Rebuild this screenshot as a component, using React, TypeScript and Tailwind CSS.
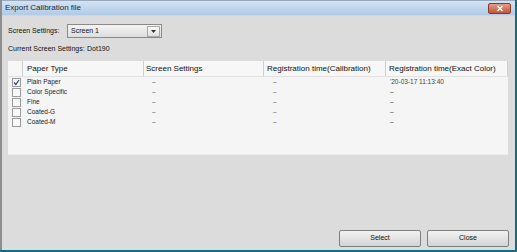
import React from "react";

const rows = [
  { name: "Plain Paper", checked: true, s: "–", c: "–", e: "'20-03-17  11:13:40" },
  { name: "Color Specific", checked: false, s: "–", c: "–", e: "–" },
  { name: "Fine", checked: false, s: "–", c: "–", e: "–" },
  { name: "Coated-G", checked: false, s: "–", c: "–", e: "–" },
  { name: "Coated-M", checked: false, s: "–", c: "–", e: "–" },
];

function Check({ checked }: { checked: boolean }) {
  return (
    <div className="w-[9px] h-[9px] border border-[#9a9a9a] bg-[#fafafa] flex items-center justify-center">
      {checked && (
        <svg width="7" height="7" viewBox="0 0 7 7">
          <path d="M1 3.5 L2.8 5.5 L6 1" stroke="#2a3f7a" strokeWidth="1.2" fill="none" />
        </svg>
      )}
    </div>
  );
}

export default function App() {
  return (
    <div
      className="w-[517px] h-[252px] bg-[#11707d] overflow-hidden"
      style={{ fontFamily: '"Liberation Sans", Arial, sans-serif' }}
    >
      <div className="w-[515px] h-[250px] flex flex-col border-l-2 border-[#8e8e8e] bg-[#dcdcdc]">
        {/* Title bar */}
        <div className="h-[16px] shrink-0 flex items-center justify-between bg-gradient-to-b from-[#d3e3f4] to-[#afcbe7] border-t border-[#9aa9bb] border-b border-b-[#c8d8e8]">
          <span className="pl-[3px] text-[8px] text-[#1c2a3c] leading-none">Export Calibration file</span>
          <div className="mr-[4px] w-[23px] h-[11px] rounded-[2px] border border-[#8b3a2a] bg-gradient-to-b from-[#e79a85] to-[#c2553c] flex items-center justify-center">
            <svg width="8" height="7" viewBox="0 0 8 7">
              <path d="M1.5 1 L6.5 6 M6.5 1 L1.5 6" stroke="#ffffff" strokeWidth="1.6" />
            </svg>
          </div>
        </div>
        {/* Body */}
        <div className="flex-1 flex flex-col pl-[6px] pr-[5px]">
          <div className="flex items-center mt-[8px] h-[14px]">
            <span className="text-[7px] text-[#111] w-[59px]">Screen Settings:</span>
            <div className="w-[95px] h-[14px] border border-[#8a8a8a] bg-gradient-to-b from-[#f4f4f4] to-[#dedede] flex items-center">
              <span className="flex-1 text-[7px] text-[#111] pl-[3px]">Screen 1</span>
              <div className="w-[13px] h-[11px] mr-[1px] border border-[#a8a8a8] bg-gradient-to-b from-[#fafafa] to-[#e0e0e0] flex items-center justify-center">
                <svg width="5" height="3" viewBox="0 0 5 3">
                  <path d="M0 0 H5 L2.5 3 Z" fill="#333" />
                </svg>
              </div>
            </div>
          </div>
          <div className="mt-[6px] text-[7px] text-[#111] flex h-[10px] items-center">
            <span className="w-[79px]">Current Screen Settings:</span>
            <span>Dot190</span>
          </div>
          {/* Table */}
          <div className="mt-[7px] w-[500px] h-[94px] bg-[#f5f5f5] flex flex-col border-b border-[#ececec]">
            <div className="h-[16px] shrink-0 flex items-stretch border-b border-[#e2e2e2] bg-[#f7f7f7] text-[8px] text-[#111]">
              <div className="w-[15px] border-r border-[#cfcfcf]" />
              <div className="w-[121px] border-r border-[#cfcfcf] flex items-center pl-[4px]">Paper Type</div>
              <div className="w-[120px] border-r border-[#cfcfcf] flex items-center pl-[2px]">Screen Settings</div>
              <div className="w-[122px] border-r border-[#cfcfcf] flex items-center pl-[3px]">Registration time(Calibration)</div>
              <div className="w-[122px] border-r border-[#cfcfcf] flex items-center pl-[3px]">Registration time(Exact Color)</div>
            </div>
            <div className="flex flex-col text-[6.5px] text-[#222]">
              {rows.map((r) => (
                <div key={r.name} className="h-[10px] flex items-center">
                  <div className="w-[15px] pl-[4px] flex items-center">
                    <Check checked={r.checked} />
                  </div>
                  <div className="w-[121px] pl-[4px]">{r.name}</div>
                  <div className="w-[120px] pl-[8px] text-[#666]">{r.s}</div>
                  <div className="w-[122px] pl-[9px] text-[#666]">{r.c}</div>
                  <div className="w-[122px] pl-[4px] text-[#444]">{r.e}</div>
                </div>
              ))}
            </div>
          </div>
          <div className="flex-1" />
          <div className="flex justify-end gap-[6px] mb-[3px] mr-[1px]">
            <button className="w-[82px] h-[17px] rounded-[2px] border border-[#7f7f7f] bg-gradient-to-b from-[#f2f2f2] to-[#d4d4d4] text-[7px] text-[#111]">Select</button>
            <button className="w-[82px] h-[17px] rounded-[2px] border border-[#7f7f7f] bg-gradient-to-b from-[#f2f2f2] to-[#d4d4d4] text-[7px] text-[#111]">Close</button>
          </div>
        </div>
      </div>
    </div>
  );
}
